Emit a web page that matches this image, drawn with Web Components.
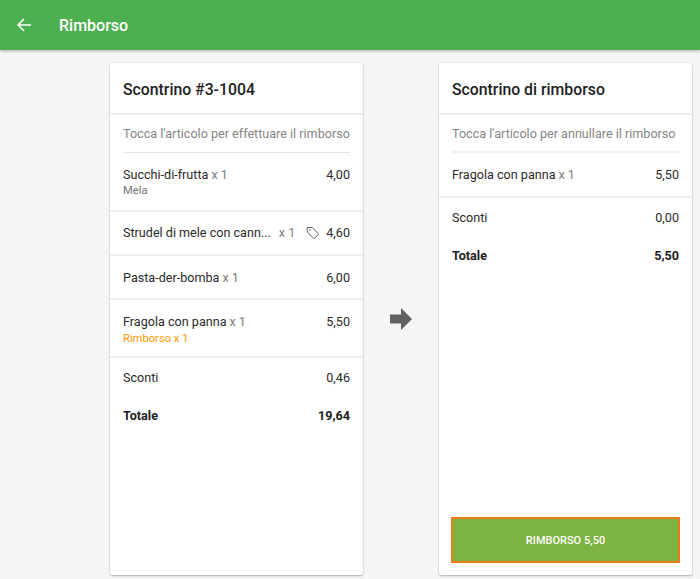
<!DOCTYPE html>
<html lang="it">
<head>
<meta charset="utf-8">
<title>Rimborso</title>
<style>
  html, body { margin: 0; height: 100%; }
  body { background: #f5f5f5; font-family: Roboto, sans-serif; overflow: hidden; }
</style>
</head>
<body>
<refund-page>
  <receipt-card slot="left" title="Scontrino #3-1004" hint="Tocca l'articolo per effettuare il rimborso">
    <receipt-row name="Succhi-di-frutta" qty="x 1" price="4,00" note="Mela"></receipt-row>
    <receipt-row name="Strudel di mele con cann..." qty="x 1" price="4,60" tag></receipt-row>
    <receipt-row name="Pasta-der-bomba" qty="x 1" price="6,00"></receipt-row>
    <receipt-row name="Fragola con panna" qty="x 1" price="5,50" refund="Rimborso x 1"></receipt-row>
    <receipt-total label="Sconti" value="0,46"></receipt-total>
    <receipt-total label="Totale" value="19,64" bold></receipt-total>
  </receipt-card>
  <receipt-card slot="right" title="Scontrino di rimborso" hint="Tocca l'articolo per annullare il rimborso">
    <receipt-row name="Fragola con panna" qty="x 1" price="5,50" solo></receipt-row>
    <receipt-total label="Sconti" value="0,00"></receipt-total>
    <receipt-total label="Totale" value="5,50" bold></receipt-total>
    <button-refund slot="footer">RIMBORSO 5,50</button-refund>
  </receipt-card>
</refund-page>

<script>
class RefundPage extends HTMLElement {
  constructor() {
    super()
    this.attachShadow({ mode: 'open' })
    this.shadowRoot.innerHTML = `
      <style>
        :host { display: flex; flex-direction: column; height: 579px; }
        header {
          flex: none; height: 50px; background: #4caf50; color: #fff;
          display: flex; align-items: center; padding-left: 16px;
          box-shadow: 0 1px 3px rgba(0,0,0,.3);
          position: relative;
        }
        header svg { width: 16px; height: 16px; display: block; }
        header h1 { margin: 0 0 0 27px; font-size: 16px; font-weight: 500; }
        main {
          flex: 1; min-height: 0; display: flex; justify-content: flex-end;
          padding: 13px 8px 4px 0;
        }
        .arrow { width: 76px; display: flex; align-items: center; justify-content: center; }
        .arrow svg { width: 22px; height: 22px; display: block; }
      </style>
      <header>
        <svg viewBox="0 0 16 16" fill="none" stroke="#fff" stroke-width="1.6">
          <path d="M15 8H2M8 2 2 8l6 6"/>
        </svg>
        <h1>Rimborso</h1>
      </header>
      <main>
        <slot name="left"></slot>
        <div class="arrow">
          <svg viewBox="0 0 22 22"><path fill="#616161" d="M0 6.5h11V0l11 11-11 11v-6.5H0z"/></svg>
        </div>
        <slot name="right"></slot>
      </main>
    `
  }
}

class ReceiptCard extends HTMLElement {
  constructor() {
    super()
    this.attachShadow({ mode: 'open' })
  }

  connectedCallback() {
    this.shadowRoot.innerHTML = `
      <style>
        :host {
          display: flex; flex-direction: column; width: 253px; height: 512px;
          background: #fff; border-radius: 2px;
          box-shadow: 0 1px 2px rgba(0,0,0,.25), 0 0 2px rgba(0,0,0,.12);
          color: #212121;
        }
        h2 {
          margin: 0; height: 50px; line-height: 53px; padding: 0 13px;
          font-size: 15.8px; font-weight: 500; color: #212121;
          border-bottom: 2px solid #efefef;
        }
        .hint {
          margin: 0 13px; height: 37px; line-height: 37px; font-size: 12.6px;
          color: #858585; white-space: nowrap; border-bottom: 1px solid #e4e4e4;
        }
        :host([slot="right"]) .hint { height: 36px; border-bottom: 2px solid #efefef; }
        .rows { display: flex; flex-direction: column; flex: 1; }
        .footer { padding: 0 12px 12px; }
      </style>
      <h2>${this.getAttribute('title')}</h2>
      <p class="hint">${this.getAttribute('hint')}</p>
      <div class="rows"><slot></slot></div>
      <div class="footer"><slot name="footer"></slot></div>
    `
  }
}

class ReceiptRow extends HTMLElement {
  constructor() {
    super()
    this.attachShadow({ mode: 'open' })
  }

  connectedCallback() {
    const sub = this.getAttribute('note') || this.getAttribute('refund')
    const tag = this.hasAttribute('tag') ? `
      <svg class="tag" viewBox="0 0 14 14" fill="none" stroke="#616161" stroke-width="1">
        <path d="M1 1.5h5.2l6.6 6.6-4.7 4.7L1.5 6.2z" stroke-linejoin="round"/>
        <circle cx="4" cy="4" r=".8" fill="#616161" stroke="none"/>
      </svg>` : ''
    this.shadowRoot.innerHTML = `
      <style>
        :host {
          display: block; padding: 0 13px; font-size: 12.6px;
          border-bottom: 2px solid #efefef;
        }
        :host([solo]) { padding-bottom: 1px; }
        .line { display: flex; align-items: center; height: 42px; }
        :host([tag]) .line { height: 41px; padding-bottom: 1px; }
        .name { white-space: nowrap; color: #2b2b2b; }
        .qty { color: #7d7d7d; margin-left: 3px; }
        :host([tag]) .qty { margin-left: 8px; }
        .price { margin-left: auto; color: #2b2b2b; }
        .tag { width: 14px; height: 14px; margin-left: auto; }
        .tag + .price { margin-left: 6px; }
        .sub { font-size: 11.2px; line-height: 14px; margin-top: -10px; height: 24px; color: #757575; }
        :host([note]) .sub { margin-top: -11px; height: 26px; }
        :host([refund]) .sub { color: #ff9800; }
      </style>
      <div class="line">
        <span class="name">${this.getAttribute('name')}</span>
        <span class="qty">${this.getAttribute('qty')}</span>
        ${tag}
        <span class="price">${this.getAttribute('price')}</span>
      </div>
      ${sub ? `<div class="sub">${sub}</div>` : ''}
    `
  }
}

class ReceiptTotal extends HTMLElement {
  constructor() {
    super()
    this.attachShadow({ mode: 'open' })
  }

  connectedCallback() {
    this.shadowRoot.innerHTML = `
      <style>
        :host {
          display: flex; justify-content: space-between; align-items: center;
          height: 38px; padding: 0 13px; font-size: 12.6px; color: #2b2b2b;
        }
        :host([bold]) { font-weight: 700; color: #212121; }
      </style>
      <span>${this.getAttribute('label')}</span>
      <span>${this.getAttribute('value')}</span>
    `
  }
}

class ButtonRefund extends HTMLElement {
  constructor() {
    super()
    this.attachShadow({ mode: 'open' })
    this.shadowRoot.innerHTML = `
      <style>
        :host {
          display: flex; align-items: center; justify-content: center;
          box-sizing: border-box; height: 46px;
          background: #7cb342; border: 2px solid #ef7a1a;
          color: #fff; font-size: 11px; font-weight: 500;
        }
      </style>
      <slot></slot>
    `
  }
}

customElements.define('refund-page', RefundPage)
customElements.define('receipt-card', ReceiptCard)
customElements.define('receipt-row', ReceiptRow)
customElements.define('receipt-total', ReceiptTotal)
customElements.define('button-refund', ButtonRefund)
</script>
</body>
</html>
